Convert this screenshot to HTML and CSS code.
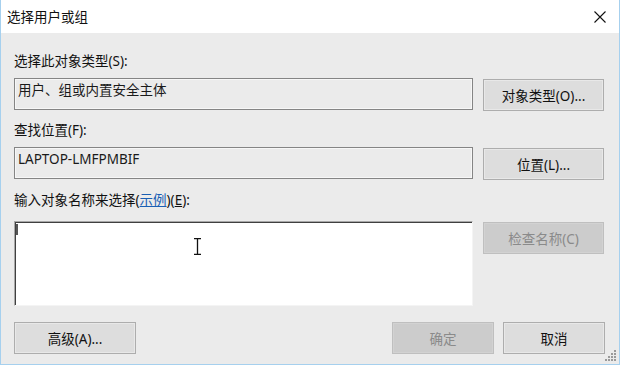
FILE: index.html
```html
<!DOCTYPE html>
<html lang="zh-CN">
<head>
  <meta charset="UTF-8" />
  <meta name="viewport" content="width=device-width, initial-scale=1.0"/>
  <title>选择用户或组</title>
  <link rel="stylesheet" href="styles.css">
</head>
<body>

  <div class="dialog">
    <!-- Title bar -->
    <div class="titlebar">
      <span class="title">选择用户或组</span>
      <svg class="close" width="12" height="12" viewBox="0 0 12 12">
        <path d="M0.5 0.5 L11.5 11.5 M11.5 0.5 L0.5 11.5" stroke="#111" stroke-width="1.1" fill="none"/>
      </svg>
    </div>

    <div class="content">
      <div class="label first">选择此对象类型(S):</div>
      <div class="row">
        <div class="field">用户、组或内置安全主体</div>
        <button class="btn">对象类型(O)...</button>
      </div>

      <div class="label">查找位置(F):</div>
      <div class="row">
        <div class="field">LAPTOP-LMFPMBIF</div>
        <button class="btn">位置(L)...</button>
      </div>

      <div class="label names-label">输入对象名称来选择(<a class="link">示例</a>)(<u>E</u>):</div>
      <div class="row">
        <div class="names">
          <span class="caret"></span>
          <svg class="ibeam" width="9" height="17" viewBox="0 0 9 17">
            <path d="M1 0.5 H8 M1 16.5 H8 M4.5 0.5 V16.5" stroke="#111" stroke-width="1.3" fill="none"/>
          </svg>
        </div>
        <button class="btn" disabled>检查名称(C)</button>
      </div>

      <div class="footer">
        <button class="btn advanced">高级(A)...</button>
        <span class="spacer"></span>
        <button class="btn small" disabled>确定</button>
        <button class="btn small">取消</button>
      </div>
    </div>

    <!-- Resize grip -->
    <svg class="grip" width="12" height="12" viewBox="0 0 12 12">
      <g fill="#9a9a9a">
        <rect x="9" y="0" width="2" height="2"/>
        <rect x="6" y="3" width="2" height="2"/><rect x="9" y="3" width="2" height="2"/>
        <rect x="3" y="6" width="2" height="2"/><rect x="6" y="6" width="2" height="2"/><rect x="9" y="6" width="2" height="2"/>
        <rect x="0" y="9" width="2" height="2"/><rect x="3" y="9" width="2" height="2"/><rect x="6" y="9" width="2" height="2"/><rect x="9" y="9" width="2" height="2"/>
      </g>
    </svg>
  </div>

</body>
</html>
```

FILE: styles.css
```css
/* Windows style picker dialog */
body {
  margin: 0;
  font-family: "Noto Sans", "Noto Sans CJK SC", sans-serif;
  font-size: 13.5px;
  color: #111;
}

.dialog {
  position: relative;
  width: 620px;
  height: 365px;
  box-sizing: border-box;
  background: #ebebeb;
  border: 1px solid #a6d0ee;
  border-top: none;
}

.titlebar {
  height: 33px;
  background: #fff;
  display: flex;
  align-items: center;
  justify-content: space-between;
  padding: 0 13px 0 6px;
}

.title {
  line-height: 18px;
}

.close {
  display: block;
}

.content {
  padding: 19px 14px 0 13px;
}

.label {
  height: 18px;
  line-height: 18px;
  margin: 10px 0 8px;
}

.label.first {
  margin-top: 0;
}

.names-label {
  margin: 11px 0 12px;
}

.link {
  color: #1a5fb4;
  text-decoration: underline;
}

.row {
  display: grid;
  grid-template-columns: 459px 121px;
  column-gap: 10px;
  align-items: start;
}

.field {
  height: 32px;
  box-sizing: border-box;
  border: 1px solid #858585;
  box-shadow: inset 0 0 0 1px #f7f7f7;
  padding: 2px 3px;
  line-height: 18px;
  color: #1a1a1a;
}

.btn {
  height: 32px;
  box-sizing: border-box;
  border: 1px solid #adadad;
  box-shadow: inset 0 0 0 1px #e8e8e8;
  background: #dddddd;
  font-family: inherit;
  font-size: 13.5px;
  color: #111;
  padding: 0;
  margin-top: 1px;
}

.btn:disabled {
  background: #cccccc;
  border-color: #bfbfbf;
  box-shadow: inset 0 0 0 1px #d2d2d2;
  color: #8a8a8a;
}

.names {
  position: relative;
  height: 85px;
  box-sizing: border-box;
  background: #fff;
  border: 1px solid;
  border-color: #a8a8a8 #f4f4f4 #f4f4f4 #a8a8a8;
  box-shadow: inset 1px 1px 0 #404040;
}

.caret {
  position: absolute;
  left: 1px;
  top: 2px;
  width: 2px;
  height: 11px;
  background: #555;
}

.ibeam {
  position: absolute;
  left: 178px;
  top: 16px;
}

.footer {
  display: flex;
  gap: 9px;
  margin-top: 16px;
}

.footer .btn {
  margin-top: 0;
}

.advanced {
  width: 122px;
}

.spacer {
  flex: 1;
}

.small {
  width: 102px;
}

.grip {
  position: absolute;
  right: 2px;
  bottom: 2px;
}
```
